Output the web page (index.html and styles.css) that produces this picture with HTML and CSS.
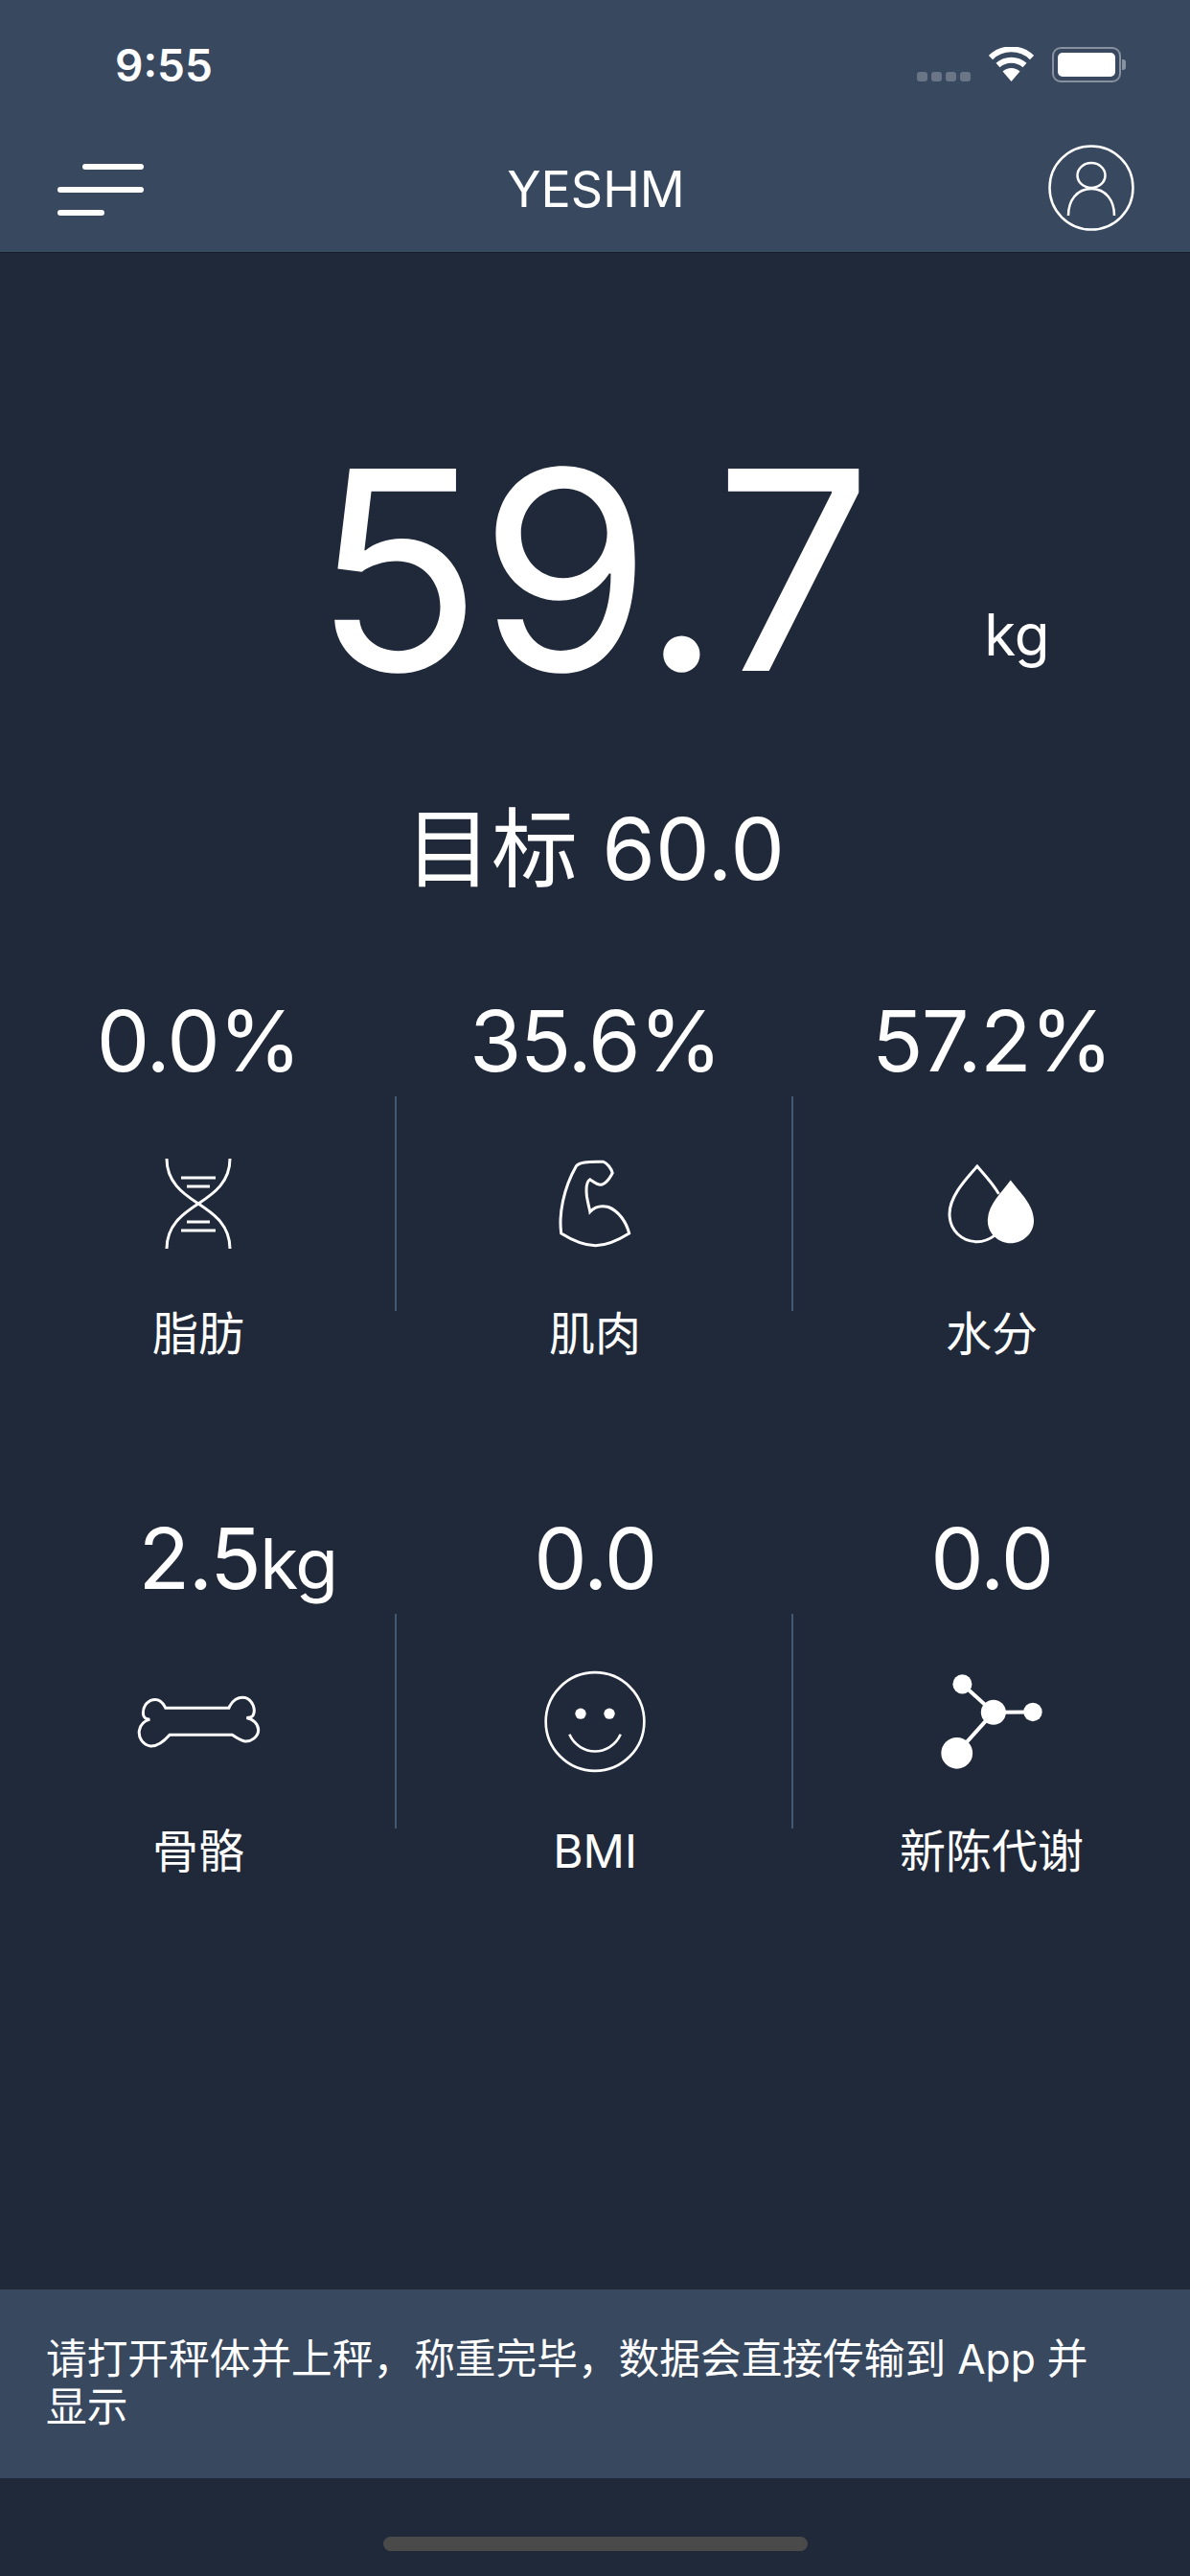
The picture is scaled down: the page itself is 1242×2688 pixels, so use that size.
FILE: index.html
```html
<!DOCTYPE html>
<html lang="zh">
<head>
    <meta charset="UTF-8">
    <meta name="viewport" content="width=device-width, initial-scale=1.0">
    <title>YESHM</title>
    <link rel="stylesheet" href="styles.css">
</head>
<body>

    <div class="page">
        <header class="header">
            <div class="status-bar">
                <span class="status-time">9:55</span>
                <div class="status-icons">
                    <div class="signal"><i></i><i></i><i></i><i></i></div>
                    <svg class="wifi" width="47" height="36" viewBox="0 0 47 36" fill="none" stroke="#fff" stroke-width="6">
                        <path d="M2 11 A31 31 0 0 1 45 11"/>
                        <path d="M9.500 19 A21 21 0 0 1 37.500 19"/>
                        <path d="M23.500 36 L14.500 25.500 A13 13 0 0 1 32.500 25.500 Z" fill="#fff" stroke="none"/>
                    </svg>
                    <div class="battery"><div class="battery-fill"></div></div>
                </div>
            </div>
            <div class="nav-bar">
                <div class="menu-icon"><span class="bar-short"></span><span class="bar-long"></span><span class="bar-tiny"></span></div>
                <span class="nav-title">YESHM</span>
                <svg class="avatar" width="90" height="90" viewBox="0 0 90 90" fill="none" stroke="#fff" stroke-width="2.500">
                    <circle cx="45" cy="45" r="43.500"/>
                    <ellipse cx="45" cy="32" rx="14.500" ry="13"/>
                    <path d="M21 74 C21 58 30 46 45 46 C60 46 69 58 69 74"/>
                </svg>
            </div>
        </header>

        <main class="main">
            <div class="weight">
                <span class="weight-value">59.7</span>
                <span class="weight-unit">kg</span>
            </div>
            <div class="target">目标 60.0</div>

            <div class="stats">
                <div class="stat">
                    <div class="stat-value">0.0%</div>
                    <div class="stat-icon">
                        <svg width="72" height="94" viewBox="0 0 72 94" fill="none" stroke="#fff" stroke-width="3">
                            <path d="M3 0 C3 24 19 36 36 47 C53 58 69 70 69 94"/>
                            <path d="M69 0 C69 24 53 36 36 47 C19 58 3 70 3 94"/>
                            <path d="M18 20 H54 M24 29 H48 M24 66 H48 M18 75 H54"/>
                        </svg>
                    </div>
                    <div class="stat-label">脂肪</div>
                </div>
                <div class="stat">
                    <div class="stat-value">35.6%</div>
                    <div class="stat-icon">
                        <svg width="77" height="92" viewBox="130 120 230 275" fill="none" stroke="#fff" stroke-width="9">
                            <path d="M138 350 C130 290 145 210 185 140 C195 128 215 126 270 127 C280 130 295 148 298 162 C290 175 285 190 265 198 C250 200 240 190 228 182 C215 190 215 210 218 235 C222 260 226 270 228 283 C240 270 260 262 285 268 C315 280 340 310 350 350 C310 375 280 388 245 388 C205 388 170 370 138 350 Z"/>
                        </svg>
                    </div>
                    <div class="stat-label">肌肉</div>
                </div>
                <div class="stat">
                    <div class="stat-value">57.2%</div>
                    <div class="stat-icon">
                        <svg width="92" height="83" viewBox="90 72 275 250" fill="none" stroke="#fff" stroke-width="9">
                            <path d="M250 165 C230 130 205 105 182 78 C150 115 95 170 95 228 C95 280 135 315 182 315 C200 315 220 308 236 296"/>
                            <path d="M287 122 C255 165 215 200 215 250 C215 290 250 320 287 320 C325 320 360 290 360 250 C360 200 320 165 287 122 Z" fill="#fff" stroke="none"/>
                        </svg>
                    </div>
                    <div class="stat-label">水分</div>
                </div>
                <div class="stat">
                    <div class="stat-value stat-value-unit">2.5<small>kg</small></div>
                    <div class="stat-icon">
                        <svg width="131" height="57" viewBox="65 82 392 170" fill="none" stroke="#fff" stroke-width="9">
                            <path d="M157 124 L355 124 C365 100 385 88 405 92 C430 100 440 130 430 148 C425 155 415 155 410 155 C430 158 448 175 447 195 C445 215 425 230 405 228 C390 226 375 215 365 208 L170 208 C155 225 135 245 110 243 C85 240 72 215 75 195 C78 175 90 165 108 160 C95 160 87 152 87 140 C87 115 105 98 125 98 C140 98 150 110 157 124 Z"/>
                        </svg>
                    </div>
                    <div class="stat-label">骨骼</div>
                </div>
                <div class="stat">
                    <div class="stat-value">0.0</div>
                    <div class="stat-icon">
                        <svg width="110" height="107" viewBox="50 35 330 320" fill="none" stroke="#fff" stroke-width="8">
                            <circle cx="215" cy="195" r="154"/>
                            <circle cx="170" cy="170" r="17" fill="#fff" stroke="none"/>
                            <circle cx="260" cy="170" r="17" fill="#fff" stroke="none"/>
                            <path d="M135 235 C150 270 185 288 215 288 C245 288 280 270 295 235"/>
                        </svg>
                    </div>
                    <div class="stat-label">BMI</div>
                </div>
                <div class="stat">
                    <div class="stat-value">0.0</div>
                    <div class="stat-icon">
                        <svg width="108" height="101" viewBox="35 46 323 302" fill="#fff">
                            <path d="M105 80 L202 168 L325 167 M202 168 L88 295" fill="none" stroke="#fff" stroke-width="12"/>
                            <circle cx="105" cy="80" r="30"/>
                            <circle cx="202" cy="168" r="39"/>
                            <circle cx="325" cy="167" r="29"/>
                            <circle cx="88" cy="295" r="49"/>
                        </svg>
                    </div>
                    <div class="stat-label">新陈代谢</div>
                </div>
            </div>
        </main>

        <div class="notice">请打开秤体并上秤，称重完毕，数据会直接传输到 App 并显示</div>

        <div class="home-area"><div class="home-bar"></div></div>
    </div>

</body>
</html>
```

FILE: styles.css
```css
/* Estilos gerais */
body {
    margin: 0;
    padding: 0;
    background-color: #20293a;
    color: #fff;
    font-family: Inter, "Noto Sans CJK SC", sans-serif;
}

.page {
    width: 1242px;
    height: 2688px;
    display: flex;
    flex-direction: column;
    overflow: hidden;
}

/* Topo */
.header {
    height: 263px;
    flex-shrink: 0;
    background-color: #38485f;
    border-bottom: 1px solid #141b29;
}

.status-bar {
    height: 132px;
    display: flex;
    justify-content: space-between;
    align-items: flex-start;
    padding: 0 72px 0 120px;
}

.status-time {
    margin-top: 40px;
    font-size: 46px;
    line-height: 56px;
    font-weight: 600;
}

.status-icons {
    display: flex;
    align-items: flex-start;
    margin-top: 49px;
}

.signal {
    display: flex;
    gap: 4px;
    margin-top: 26px;
    margin-right: 19px;
}

.signal i {
    width: 11px;
    height: 10px;
    border-radius: 3px;
    background-color: rgba(255, 255, 255, 0.25);
}

.battery {
    position: relative;
    width: 72px;
    height: 37px;
    margin-left: 19px;
    box-sizing: border-box;
    padding: 4px;
    border: 2px solid rgba(255, 255, 255, 0.4);
    border-radius: 9px;
}

.battery::after {
    content: "";
    position: absolute;
    right: -7px;
    top: 11px;
    width: 4px;
    height: 11px;
    border-radius: 0 3px 3px 0;
    background-color: rgba(255, 255, 255, 0.4);
}

.battery-fill {
    height: 100%;
    border-radius: 5px;
    background-color: #fff;
}

.nav-bar {
    height: 131px;
    display: flex;
    justify-content: space-between;
    align-items: center;
    padding: 0 60px;
}

.menu-icon {
    width: 90px;
    display: flex;
    flex-direction: column;
    align-items: flex-end;
    gap: 18px;
}

.menu-icon span {
    height: 6px;
    border-radius: 3px;
    background-color: #fff;
}

.bar-short { width: 64px; }
.bar-long { width: 90px; }
.bar-tiny { width: 49px; align-self: flex-start; }

.nav-title {
    font-size: 52px;
    font-weight: 380;
}

.avatar {
    margin-right: -2px;
    margin-bottom: 3px;
}

/* Peso */
.main {
    flex: 1;
    min-height: 0;
    padding-top: 166px;
}

.weight {
    display: grid;
    grid-template-columns: 1fr auto 1fr;
    height: 334px;
}

.weight-value {
    grid-column: 2;
    margin-right: 8px;
    font-size: 290px;
    font-weight: 380;
    line-height: 330px;
    letter-spacing: -3px;
}

.weight-unit {
    align-self: start;
    margin-top: 197px;
    margin-left: 112px;
    font-size: 60px;
    line-height: 70px;
    font-weight: 380;
}

.target {
    margin-top: 67px;
    text-align: center;
    font-size: 90px;
    line-height: 110px;
    font-weight: 380;
}

/* Medidas */
.stats {
    display: grid;
    grid-template-columns: repeat(3, 414px);
    grid-auto-rows: 391px;
    row-gap: 149px;
    margin-top: 90px;
}

.stat {
    display: flex;
    flex-direction: column;
    align-items: center;
    position: relative;
}

.stat:not(:nth-child(3n))::after {
    content: "";
    position: absolute;
    right: 0;
    top: 113px;
    width: 2px;
    height: 224px;
    background-color: #455872;
}

.stat-value {
    font-size: 88px;
    line-height: 110px;
    font-weight: 380;
    letter-spacing: -1.500px;
}

.stat-value small {
    font-size: 73px;
    line-height: 0;
}

.stat-value-unit {
    padding-left: 82px;
}

.stat-icon {
    flex-shrink: 0;
    height: 124px;
    margin-top: 53px;
    display: flex;
    justify-content: center;
    align-items: center;
}

.stat-label {
    margin-top: 44px;
    font-size: 48px;
    line-height: 60px;
    font-weight: 400;
}

/* Aviso */
.notice {
    height: 197px;
    flex-shrink: 0;
    box-sizing: border-box;
    padding: 48px 80px 0 48px;
    background-color: #38485f;
    font-size: 42.700px;
    line-height: 50px;
    font-weight: 400;
}

.home-area {
    height: 102px;
    flex-shrink: 0;
    display: flex;
    justify-content: center;
    padding-top: 61px;
    box-sizing: border-box;
}

.home-bar {
    width: 443px;
    height: 15px;
    border-radius: 8px;
    background-color: #4a4a4a;
}
```
